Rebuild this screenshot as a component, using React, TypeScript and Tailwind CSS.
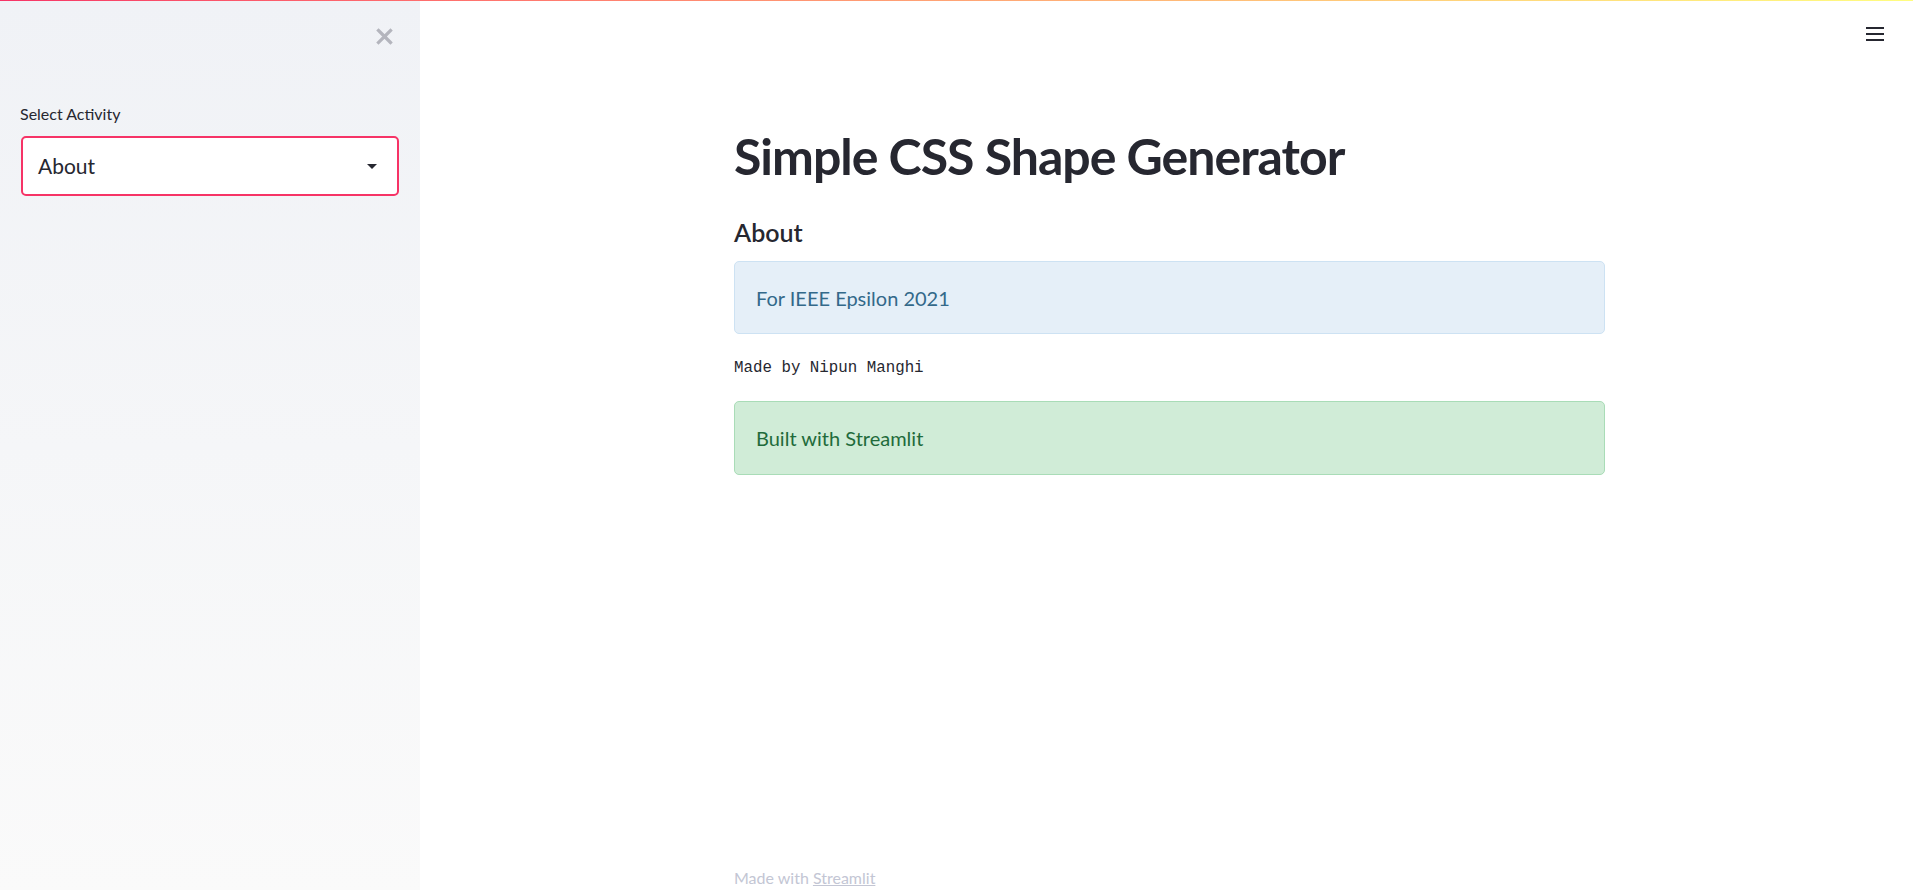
import { useState } from 'react'

const sans = "font-['Lato','Noto_Sans',sans-serif]"

function CloseIcon() {
  return (
    <svg width="17" height="17" viewBox="0 0 17 17" fill="none">
      <path d="M2.5 2.5 L14.5 14.5 M14.5 2.5 L2.5 14.5" stroke="#b4b5bd" strokeWidth="3.2" strokeLinecap="square" />
    </svg>
  )
}

function Sidebar({ activity }: { activity: string }) {
  return (
    <aside className="w-[420px] shrink-0 h-full bg-gradient-to-b from-[#f0f2f6] to-[#fafafa] flex flex-col">
      <div className="flex justify-end pt-[28px] pr-[27px]">
        <button className="w-[17px] h-[17px] flex items-center justify-center">
          <CloseIcon />
        </button>
      </div>
      <div className="px-[20px] pt-[59px]">
        <label className={`${sans} block text-[16px] text-[#262730] leading-[20px] mb-[12px]`}>Select Activity</label>
        <div className="ml-px h-[60px] w-[378px] bg-white border-2 border-[#f63366] rounded-[5px] flex items-center justify-between pl-[15px] pr-[20px]">
          <span className={`${sans} text-[21px] text-[#262730]`}>{activity}</span>
          <svg width="10" height="5" viewBox="0 0 10 5">
            <path d="M0 0 L10 0 L5 5 Z" fill="#262730" />
          </svg>
        </div>
      </div>
    </aside>
  )
}

export default function App() {
  const [activity] = useState('About')

  return (
    <div className="relative w-full h-screen flex overflow-hidden bg-white">
      <div className="absolute top-0 left-0 right-0 h-px bg-gradient-to-r from-[#f63366] to-[#fffd80] z-10" />
      <Sidebar activity={activity} />

      <main className="relative flex-1 h-full flex flex-col">
        <button className="absolute top-[27px] right-[29px] w-[18px] flex flex-col gap-[4px]">
          <span className="block h-[2px] w-full bg-[#262730]" />
          <span className="block h-[2px] w-full bg-[#262730]" />
          <span className="block h-[2px] w-full bg-[#262730]" />
        </button>

        <div className="flex-1 flex justify-center pl-[6px]">
          <div className="w-[871px] pt-[125px] flex flex-col">
            <h1 className={`${sans} font-bold text-[50px] leading-[62px] tracking-[-1px] text-[#262730]`}>
              Simple CSS Shape Generator
            </h1>
            <h3 className={`${sans} font-semibold text-[25px] leading-[32px] text-[#262730] mt-[29px]`}>
              About
            </h3>
            <div className="mt-[13px] h-[73px] rounded-[5px] bg-[#e5eff8] border border-[#cde2f3] flex items-center px-[21px]">
              <span className={`${sans} text-[20px] text-[#33698a]`}>For IEEE Epsilon 2021</span>
            </div>
            <p className="mt-[24px] font-['Liberation_Mono','DejaVu_Sans_Mono',monospace] text-[15.8px] leading-[20px] text-[#262730]">
              Made by Nipun Manghi
            </p>
            <div className="mt-[23px] h-[74px] rounded-[5px] bg-[#d0ecd7] border border-[#a9dcb7] flex items-center px-[21px]">
              <span className={`${sans} text-[20px] text-[#1f6b3b]`}>Built with Streamlit</span>
            </div>

            <footer className={`${sans} mt-auto text-[16px] leading-[24px] text-[#c3c6d4] mb-0`}>
              Made with <span className="underline">Streamlit</span>
            </footer>
          </div>
        </div>
      </main>
    </div>
  )
}
